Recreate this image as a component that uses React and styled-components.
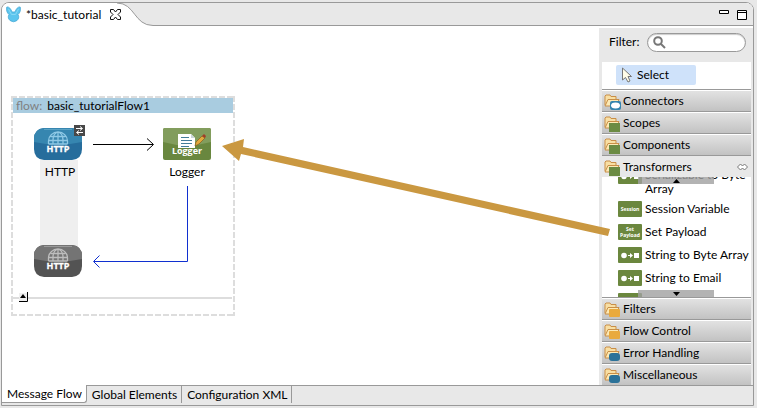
import React from "react";
import styled, { createGlobalStyle } from "styled-components";

const Global = createGlobalStyle`
  * { box-sizing: border-box; }
  body { margin: 0; background: #e8e8e8; color: #000; font: 12px/16px Lato, "Open Sans", sans-serif; }
  button, input { font: inherit; color: inherit; }
  button { border: 0; padding: 0; background: none; text-align: left; white-space: nowrap; }
  svg { display: block; flex: none; }
`;

const Page = styled.main`
  min-height: 100vh;
  padding: 2px 3px 2px 1px;
  display: flex;
`;
const Frame = styled.section`
  flex: 1;
  min-width: 0;
  display: flex;
  flex-direction: column;
  border: 1px solid #999;
  border-radius: 8px 8px 0 0;
  background: #fff;
  overflow: hidden;
`;
const TitleBar = styled.header`
  height: 23px;
  display: flex;
  background: #fff;
`;
const FileTab = styled.div`
  display: flex;
  align-items: center;
  gap: 5px;
  padding-left: 4px;
`;
const FileName = styled.span`
  padding-right: 4px;
`;
const TabEdge = styled.svg`
  margin-left: -4px;
`;
const TitleRest = styled.div`
  flex: 1;
  display: flex;
  justify-content: flex-end;
  gap: 8px;
  padding: 3px 6px 0 0;
  background: #e8e8e8;
  border-bottom: 1px solid #999;
`;
const IconButton = styled.button`
  display: flex;
  align-self: ${(p) => (p.$top ? "flex-start" : "center")};
`;
const Body = styled.div`
  position: relative;
  flex: 1;
  display: flex;
  min-height: 359px;
`;
const Canvas = styled.div`
  position: relative;
  flex: 1;
  min-width: 0;
`;
const dash = (dir) => `repeating-linear-gradient(${dir}, #ddd 0 6px, transparent 6px 8px)`;
const Flow = styled.section`
  position: absolute;
  left: 9px;
  top: 70px;
  width: 224px;
  height: 220px;
  padding: 2px;
  background:
    ${dash("to right")} top / 100% 2px no-repeat,
    ${dash("to right")} bottom / 100% 2px no-repeat,
    ${dash("to bottom")} left / 2px 100% no-repeat,
    ${dash("to bottom")} right / 2px 100% no-repeat;
`;
const FlowTitle = styled.h2`
  margin: 0;
  height: 15px;
  padding-left: 3px;
  background: #a9cce0;
  font-size: 12px;
  font-weight: 400;
  line-height: 16px;
`;
const Muted = styled.span`
  color: #808080;
  margin-right: 5px;
`;
const Lane = styled.div`
  position: absolute;
  left: 38px;
  top: 134px;
  width: 38px;
  height: 100px;
  background: #efefef;
`;
const Node = styled.div`
  position: absolute;
  left: ${(p) => p.$x}px;
  top: ${(p) => p.$y}px;
  width: 48px;
  display: flex;
  flex-direction: column;
  align-items: center;
  gap: 4px;
`;
const Overlay = styled.svg`
  position: absolute;
  inset: 0;
  width: 100%;
  height: 100%;
  pointer-events: none;
`;
const Palette = styled.aside`
  width: 154px;
  flex: none;
  margin-top: 2px;
  padding: 0 2px 0 3px;
  background: #e8e8e8;
  display: flex;
  flex-direction: column;
`;
const FilterRow = styled.div`
  height: 34px;
  padding: 5px 5px 0 7px;
  display: flex;
  gap: 8px;
`;
const FilterLabel = styled.label`
  width: 30px;
  line-height: 18px;
`;
const SearchBox = styled.span`
  flex: 1;
  min-width: 0;
  height: 19px;
  display: flex;
  align-items: center;
  padding-left: 5px;
  border: 1px solid #999;
  border-radius: 10px;
  background: #fff;
  box-shadow: inset 0 1px 1px #ccc;
`;
const SearchInput = styled.input`
  flex: 1;
  min-width: 0;
  border: 0;
  padding: 0 6px;
  background: none;
  outline: 0;
`;
const SelectArea = styled.div`
  height: 27px;
  padding: 3px 0 0 14px;
  background: #fff;
`;
const SelectTool = styled.button`
  display: flex;
  align-items: center;
  gap: 4px;
  width: 80px;
  height: 20px;
  padding-left: 5px;
  border-radius: 2px;
  background: #cfe2fa;
`;
const Drawer = styled.button`
  flex: none;
  height: 22px;
  padding: 1px 3px 0 2px;
  display: flex;
  align-items: center;
  gap: 2px;
  border-top: 1px solid #999;
  background: ${(p) => (p.$open ? "#e8e8e8" : "linear-gradient(#fff 0 1px, #e2e2e2 1px, #c2c2c2 100%)")};
`;
const DrawerName = styled.span`
  flex: 1;
`;
const Items = styled.div`
  position: relative;
  flex: 1 0 120px;
  height: 120px;
  overflow: hidden;
  background: #fff;
`;
const ItemList = styled.ul`
  list-style: none;
  margin: -9px 0 0;
  padding: 0 0 0 16px;
`;
const Item = styled.li`
  display: flex;
  gap: 3px;
  margin-bottom: ${(p) => (p.$tall ? 5 : 7)}px;
  line-height: ${(p) => (p.$tall ? 14 : 16)}px;
`;
const ScrollStrip = styled.button`
  position: absolute;
  left: 36px;
  ${(p) => (p.$down ? "bottom: 0;" : "top: 0;")}
  width: 76px;
  height: 7px;
  display: flex;
  justify-content: center;
  align-items: center;
  background: rgba(160, 160, 160, 0.8);
`;
const PageTabs = styled.nav`
  height: 20px;
  display: flex;
  padding-bottom: 2px;
  background: #e8e8e8;
`;
const PageTab = styled.button`
  padding: 0 4px 0 5px;
  line-height: 16px;
  border: solid #999;
  border-width: ${(p) => (p.$active ? "0 1px 1px 0" : "1px 1px 0 0")};
  border-radius: ${(p) => (p.$active ? "0 0 3px 0" : "0")};
  background: ${(p) => (p.$active ? "#fff" : "#e8e8e8")};
`;
const TabsRest = styled.div`
  flex: 1;
  border-top: 1px solid #999;
`;

const Logo = () => (
  <svg width="15" height="17" viewBox="0 0 15 17" aria-hidden="true">
    <path d="M.8 1C3 .5 5 3 6 6H9C10 3 12 .5 14.200 1C15 4 14 7 12 8.500C13.500 11 12.500 13 11 14.500Q7.500 17 4 14.500C2.500 13 1.500 11 3 8.500C1 7 0 4 .8 1Z" fill="#5cc5ee" stroke="#46aad6" strokeWidth=".8" />
    <path d="M2.500 3L5.500 8.500H9.500L12.500 3" fill="none" stroke="#86d8f5" />
  </svg>
);
const Close = () => (
  <svg width="11" height="11" viewBox="0 0 11 11" aria-hidden="true">
    <path d="M.5.5H3.500L5.500 3L7.500.5H10.500V3L8 5.500L10.500 8V10.500H7.500L5.500 8L3.500 10.500H.5V8L3 5.500L.5 3Z" fill="#fff" stroke="#111" />
  </svg>
);
const TabCurve = () => (
  <TabEdge width="36" height="23" viewBox="0 0 36 23" aria-hidden="true">
    <path d="M0 0C18 0 17 22.500 36 22.500V0Z" fill="#e8e8e8" />
    <path d="M0 0C18 0 17 22.500 36 22.500" fill="none" stroke="#999" />
  </TabEdge>
);
const Globe = ({ color }) => (
  <path
    d="M14.500 17V14A9.500 9 0 0 1 33.500 14V17M24 5V17M19 17V13C19 9 21 6 24 5C27 6 29 9 29 13V17M16.500 9.500H31.500M14.500 13.500H33.500M14.500 17H33.500"
    fill="none"
    stroke={color}
    strokeWidth="1.300"
  />
);
const iconFont = { fontFamily: '"Open Sans", sans-serif', fontWeight: 700, textAnchor: "middle" };
const Http = ({ gray, exchange }) => (
  <svg width="52" height="35" viewBox="0 0 52 35" role="img" aria-label="HTTP">
    <path d="M10 3H38Q48 4 48 14V24Q48 34 38 35H10Q0 34 0 24V14Q0 4 10 3Z" fill={gray ? "#535353" : "#266d9c"} />
    <path d="M10 3H38Q48 4 48 14V17Q24 22 0 17V14Q0 4 10 3Z" fill={gray ? "#747474" : "#3686b0"} />
    <path d="M10 4.500H38" stroke={gray ? "#999" : "#59a2c4"} />
    <g transform="translate(0 2)"><Globe color={gray ? "#bdbdbd" : "#8fc9e6"} /></g>
    <text x="24" y="27" fontSize="9" fill="#fff" stroke="#fff" strokeWidth=".3" {...iconFont}>HTTP</text>
    {exchange && (
      <g>
        <path d="M40 0H51V11H40Z" fill="#484848" />
        <path d="M42 3.500H48M46 1.500L48.500 3.500L46 5.500M49 7.500H43M45 5.500L42.500 7.500L45 9.500" fill="none" stroke="#fff" />
      </g>
    )}
  </svg>
);
const LoggerIcon = () => (
  <svg width="48" height="32" viewBox="0 0 48 32" role="img" aria-label="Logger">
    <rect width="48" height="32" rx="2" fill="#69873f" />
    <path d="M2 0H46Q48 0 48 2V14Q24 21 0 14V2Q0 0 2 0Z" fill="#829d5d" />
    <path d="M15 6H28L32 10V20H15Z" fill="#fff" />
    <path d="M28 6V10H32" fill="#cbd5d8" />
    <path d="M18 9.500H26M18 12.500H29M18 15.500H29M18 18.500H26" stroke="#447d99" />
    <path d="M33 14L39 8L42 10L36 16L32 18Z" fill="#e2a83c" stroke="#865b1e" strokeWidth=".7" />
    <path d="M39 8L41 6L43 8L42 10Z" fill="#a03e28" />
    <text x="24" y="26" fontSize="9" fill="#fff" {...iconFont}>Logger</text>
  </svg>
);
const Folder = ({ tone }) => (
  <svg width="17" height="17" viewBox="0 0 17 17" aria-hidden="true">
    <path d="M1 12V3L2 2H6L7 3.500H12V6" fill="#f8dfa4" stroke="#c98f48" />
    <path d="M1 13L4 6.500H15L12 13Z" fill="#fce9b5" stroke="#c98f48" />
    {tone === "cloud" && <g><rect x="6" y="8" width="11" height="9" rx="2" fill="#3484ad" /><ellipse cx="11.500" cy="12.500" rx="4.500" ry="3" fill="#fff" /></g>}
    {tone === "green" && <rect x="5" y="8" width="11" height="9" fill="#6b8b43" />}
    {tone === "orange" && <rect x="5" y="8" width="11" height="8" rx="1" fill="#e9aa3e" />}
    {tone === "blue" && <rect x="5" y="8" width="11" height="8" rx="3" fill="#2b7299" />}
  </svg>
);
const Badge = ({ lines }) => (
  <svg width="24" height="16" viewBox="0 0 24 16" aria-hidden="true">
    <rect width="24" height="16" rx="1" fill="#6b873e" />
    {lines ? (
      lines.map((t, i) => (
        <text key={t} x="12" y={lines.length === 1 ? 10 : 7 + i * 6} fontSize="5" fill="#fff" {...iconFont}>{t}</text>
      ))
    ) : (
      <g fill="#fff"><circle cx="6" cy="8.500" r="2.800" /><path d="M10 8H12V6L15 8.500L12 11V9H10ZM16 6H21V11H16Z" /></g>
    )}
  </svg>
);

const drawersAbove = [["Connectors", "cloud"], ["Scopes", "green"], ["Components", "green"]];
const drawersBelow = [["Filters", "orange"], ["Flow Control", "orange"], ["Error Handling", "blue"], ["Miscellaneous", "blue"]];
const items = [
  ["Session Variable", ["Session"]],
  ["Set Payload", ["Set", "Payload"]],
  ["String to Byte Array"],
  ["String to Email"],
  ["", []],
];

export default function App() {
  return (
    <Page>
      <Global />
      <Frame>
        <TitleBar>
          <FileTab>
            <Logo />
            <FileName>*basic_tutorial</FileName>
            <IconButton aria-label="Close"><Close /></IconButton>
          </FileTab>
          <TabCurve />
          <TitleRest>
            <IconButton $top aria-label="Minimize">
              <svg width="10" height="10"><path d="M.5 4.500H9.500V7.500H.5Z" fill="#fff" stroke="#000" /></svg>
            </IconButton>
            <IconButton $top aria-label="Maximize">
              <svg width="10" height="14"><path d="M.5 4.500H9.500V13.500H.5ZM0 6.500H10" fill="#fff" stroke="#000" /></svg>
            </IconButton>
          </TitleRest>
        </TitleBar>
        <Body>
          <Canvas>
            <Flow>
              <FlowTitle><Muted>flow:</Muted>basic_tutorialFlow1</FlowTitle>
            </Flow>
            <Lane />
            <Node $x={34} $y={99}><Http exchange /><span>HTTP</span></Node>
            <Node $x={161} $y={102}><LoggerIcon /><span>Logger</span></Node>
            <Node $x={34} $y={216}><Http gray /></Node>
          </Canvas>
          <Palette>
            <FilterRow>
              <FilterLabel htmlFor="filter">Filter:</FilterLabel>
              <SearchBox>
                <svg width="13" height="13" fill="none" stroke="#777" strokeWidth="2"><circle cx="5" cy="5" r="3.800" /><path d="M8 8L12 12" /></svg>
                <SearchInput id="filter" type="text" />
              </SearchBox>
            </FilterRow>
            <SelectArea>
              <SelectTool>
                <svg width="12" height="16"><path d="M1.500 1V13L4.500 10.500L7 15L9 14L7 9.500H10.500Z" fill="#fffde9" stroke="#777" /></svg>
                Select
              </SelectTool>
            </SelectArea>
            {drawersAbove.map(([name, tone]) => (
              <Drawer key={name}><Folder tone={tone} /><DrawerName>{name}</DrawerName></Drawer>
            ))}
            <Drawer $open>
              <Folder tone="green" /><DrawerName>Transformers</DrawerName>
              <svg width="11" height="8" fill="#fff" stroke="#777"><path d="M3.500 1L.5 4L3.500 7L5.500 5L7.500 7L10.500 4L7.500 1L5.500 3Z" /></svg>
            </Drawer>
            <Items>
              <ItemList>
                <Item $tall><Badge /><span>Serializable to Byte Array</span></Item>
                {items.map(([name, lines]) => (
                  <Item key={name}><Badge lines={lines} /><span>{name}</span></Item>
                ))}
              </ItemList>
              <ScrollStrip aria-label="Scroll up"><svg width="7" height="4"><path d="M0 4L3.500 0L7 4Z" /></svg></ScrollStrip>
              <ScrollStrip $down aria-label="Scroll down"><svg width="7" height="4"><path d="M0 0L3.500 4L7 0Z" /></svg></ScrollStrip>
            </Items>
            {drawersBelow.map(([name, tone]) => (
              <Drawer key={name}><Folder tone={tone} /><DrawerName>{name}</DrawerName></Drawer>
            ))}
          </Palette>
          <Overlay aria-hidden="true">
            <path d="M91 118.500H151M145 112.500L151.500 118.500L145 124.500" fill="none" stroke="#000" />
            <path d="M185.500 160V235.500H92M97.500 229.500L91.500 235.500L97.500 241.500" fill="none" stroke="#1030d0" />
            <path d="M11 272H230" stroke="#ddd" strokeWidth="2" />
            <path d="M17 267H25V275H17Z" fill="#eee" />
            <path d="M25.500 266V275.500H17" fill="none" stroke="#000" />
            <path d="M18 272L21 268L24 272Z" />
            <path d="M220 120L242 113L241 121L608 203L606 210L239 128L237 135Z" fill="#ca9841" />
          </Overlay>
        </Body>
        <PageTabs>
          <PageTab $active>Message Flow</PageTab>
          <PageTab>Global Elements</PageTab>
          <PageTab>Configuration XML</PageTab>
          <TabsRest />
        </PageTabs>
      </Frame>
    </Page>
  );
}
